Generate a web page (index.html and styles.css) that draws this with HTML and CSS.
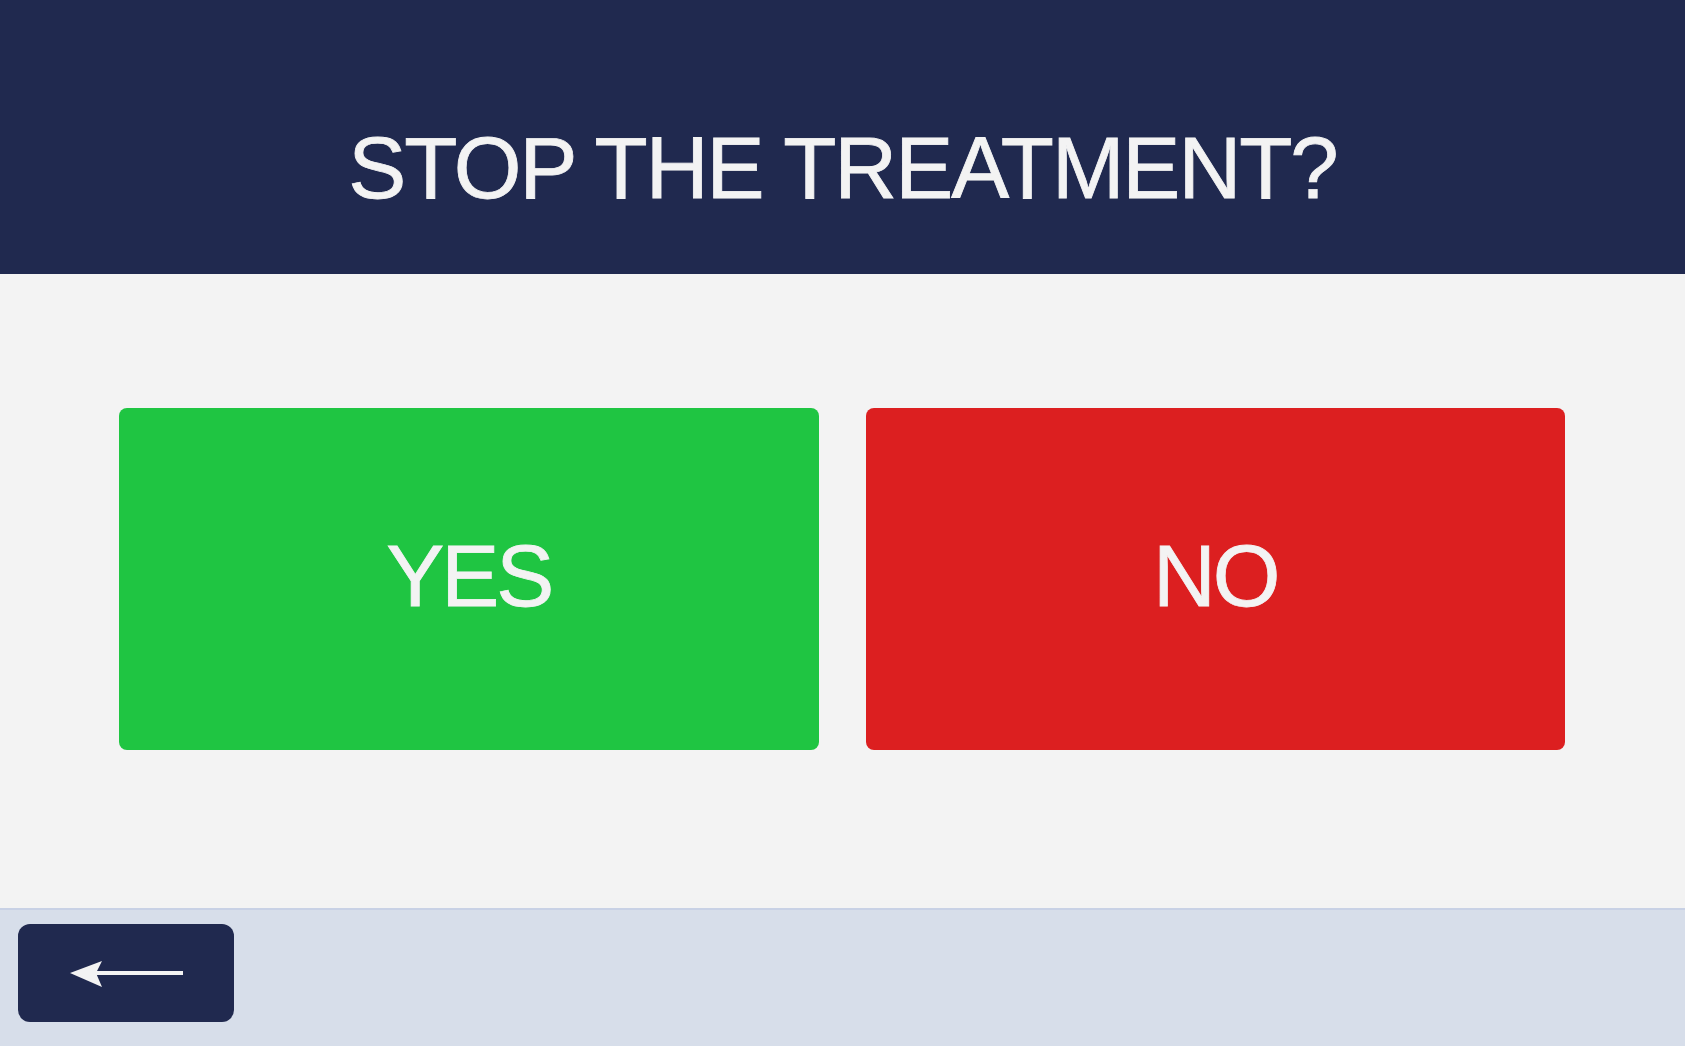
FILE: index.html
```html
<!DOCTYPE html>
<html lang="en">
<head>
  <meta charset="UTF-8" />
  <meta name="viewport" content="width=device-width, initial-scale=1.0"/>
  <title>Stop Treatment</title>
  <link rel="stylesheet" href="styles.css">
</head>
<body>

  <!-- Question header -->
  <header class="prompt">
    <h1>STOP THE TREATMENT?</h1>
  </header>

  <!-- Answer buttons -->
  <main class="choices">
    <button class="choice choice-yes">YES</button>
    <button class="choice choice-no">NO</button>
  </main>

  <!-- Bottom navigation -->
  <footer class="nav-bar">
    <button class="back-button" aria-label="Back">
      <svg width="216" height="98" viewBox="0 0 216 98">
        <rect x="76" y="47" width="89" height="4" fill="#f3f3f3"/>
        <polygon points="52,49 84,37 78,49 84,63" fill="#f3f3f3"/>
      </svg>
    </button>
  </footer>

</body>
</html>
```

FILE: styles.css
```css
* {
  box-sizing: border-box;
}
html, body {
  margin: 0;
  height: 100%;
}
body {
  font-family: "Liberation Sans", Arial, sans-serif;
  background: #f3f3f3;
  display: flex;
  flex-direction: column;
  overflow: hidden;
}
.prompt {
  height: 274px;
  background: #20294f;
  padding-top: 124px;
  text-align: center;
}
.prompt h1 {
  margin: 0;
  font-size: 87px;
  font-weight: normal;
  line-height: 1;
  letter-spacing: -2px;
  color: #f3f3f3;
  -webkit-text-stroke: 0.8px #f3f3f3;
}
.choices {
  height: 634px;
  display: flex;
  gap: 47px;
  padding: 134px 120px 0 119px;
}
.choice {
  height: 342px;
  flex: 1;
  border: none;
  border-radius: 8px;
  font-family: inherit;
  font-size: 87px;
  line-height: 1;
  letter-spacing: -3px;
  color: #f3f3f3;
  -webkit-text-stroke: 0.8px #f3f3f3;
  padding: 0 0 8px;
  cursor: pointer;
}
.choice-yes {
  background: #1fc542;
}
.choice-no {
  background: #dc1f20;
}
.nav-bar {
  flex: 1;
  background: #d7deea;
  border-top: 2px solid #c8d1e5;
  padding: 14px 18px;
}
.back-button {
  display: block;
  width: 216px;
  height: 98px;
  padding: 0;
  border: none;
  border-radius: 12px;
  background: #20294f;
  cursor: pointer;
}
.back-button svg {
  display: block;
}
```
